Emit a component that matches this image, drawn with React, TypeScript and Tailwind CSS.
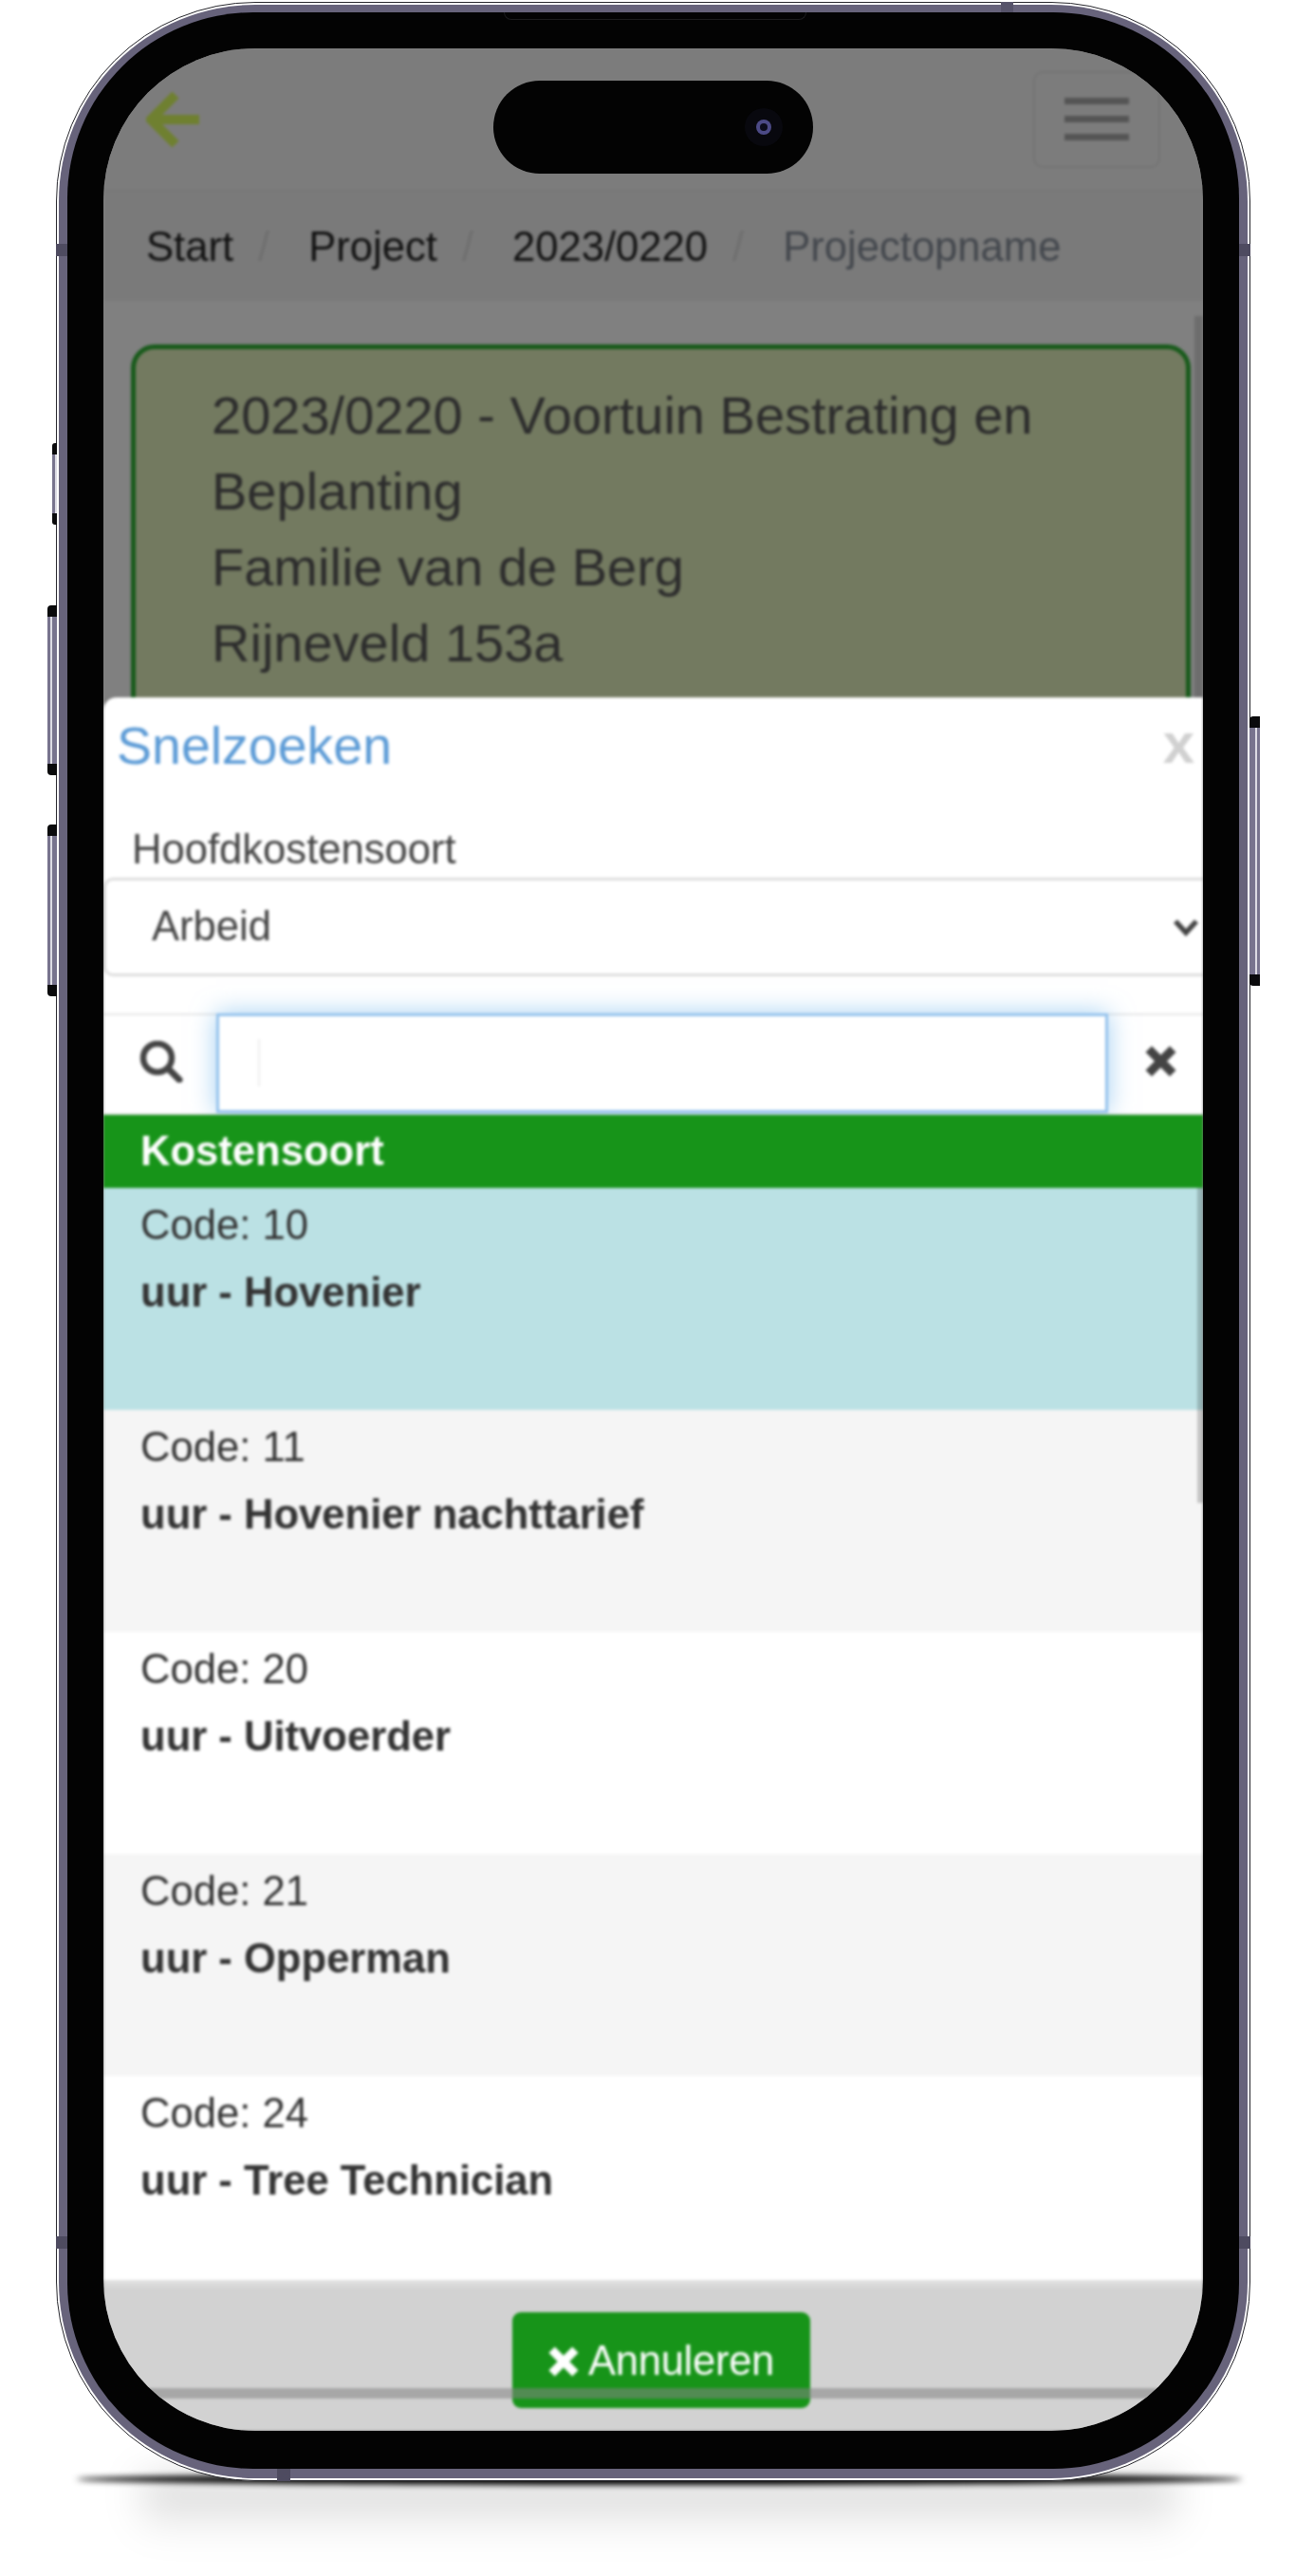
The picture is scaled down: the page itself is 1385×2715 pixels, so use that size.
import React from 'react';

const rows = [
    { code: '10', name: 'uur - Hovenier', bg: 'bg-[#bbe1e4]' },
    { code: '11', name: 'uur - Hovenier nachttarief', bg: 'bg-[#f5f5f5]' },
    { code: '20', name: 'uur - Uitvoerder', bg: 'bg-white' },
    { code: '21', name: 'uur - Opperman', bg: 'bg-[#f5f5f5]' },
    { code: '24', name: 'uur - Tree Technician', bg: 'bg-white' },
];

function SideKey({ className }: { className: string }) {
    return (
        <div className={`absolute border-y-[12px] border-[#0a0a0c] bg-[#78748e] ${className}`}>
            <div className="absolute inset-y-0 left-[3px] w-[2px] bg-[#dddce4]" />
        </div>
    );
}

function Slash() {
    return <span className="ml-[26px] mr-[41px] text-[#6f6f6f]">/</span>;
}

function RemoveIcon({ size, color }: { size: number; color: string }) {
    return (
        <svg width={size} height={size} viewBox="0 0 32 32">
            <path d="M5 5 L27 27 M27 5 L5 27" stroke={color} strokeWidth="8" fill="none" />
        </svg>
    );
}

export default function App() {
    return (
        <div className="relative w-[1385px] h-[2715px] overflow-hidden bg-white pt-[2px] pl-[59px] font-['Liberation_Sans',Arial,sans-serif]">
            {/* shadow under the phone */}
            <div className="absolute left-[80px] top-[2607px] h-[12px] w-[1230px] rounded-[50%] bg-black blur-[3px]" />
            <div className="absolute left-[150px] top-[2612px] h-[60px] w-[1090px] bg-gradient-to-b from-black/20 to-transparent blur-[20px]" />

            <div className="relative h-[2613px] w-[1259px] rounded-[210px] border border-[#26262c] bg-white p-[2px]">
                <SideKey className="left-[-5px] top-[464px] h-[86px] w-[5px] rounded-l-[3px]" />
                <SideKey className="left-[-10px] top-[635px] h-[179px] w-[10px] rounded-l-[4px]" />
                <SideKey className="left-[-10px] top-[866px] h-[181px] w-[10px] rounded-l-[4px]" />
                <SideKey className="right-[-11px] top-[752px] h-[284px] w-[11px] rounded-r-[4px] rotate-180" />

                <div className="relative h-full rounded-[207px] bg-[#67637b] px-[9px] pt-[8px] pb-[10px]">
                    {/* antenna bands */}
                    <div className="absolute left-[-3px] top-[252px] h-[13px] w-[12px] bg-[#4e4b60]" />
                    <div className="absolute right-[-3px] top-[252px] h-[13px] w-[12px] bg-[#4e4b60]" />
                    <div className="absolute left-[-3px] top-[2352px] h-[13px] w-[12px] bg-[#4e4b60]" />
                    <div className="absolute right-[-3px] top-[2352px] h-[13px] w-[12px] bg-[#4e4b60]" />
                    <div className="absolute left-[993px] top-[-3px] h-[11px] w-[13px] bg-[#56536a]" />
                    <div className="absolute left-[230px] bottom-[-3px] h-[13px] w-[14px] bg-[#4e4b60]" />

                    <div className="relative h-full rounded-[196px] bg-[#030303] px-[38px] pt-[38px] pb-[40px]">
                        {/* earpiece */}
                        <div className="absolute left-[460px] top-0 h-[8px] w-[319px] rounded-b-[8px] border-x border-b border-[#1c1c1e]" />

                        <div className="relative h-full overflow-hidden rounded-[160px] bg-[#808080]">
                            <div className="relative flex h-full flex-col blur-[1.4px]">
                                {/* top bar */}
                                <div className="flex h-[149px] shrink-0 items-center justify-between bg-[#7c7c7c] pl-[45px] pr-[45px]">
                                    <svg width="58" height="58" viewBox="0 0 58 58">
                                        <path d="M31 3 L5 29 L31 55 M5 29 L56 29" stroke="#6f8030" strokeWidth="10" fill="none" />
                                    </svg>
                                    <div className="flex h-[102px] w-[134px] flex-col items-center justify-center gap-[12px] rounded-[10px] border-2 border-[#747474]">
                                        <span className="h-[7px] w-[68px] bg-[#555]" />
                                        <span className="h-[7px] w-[68px] bg-[#555]" />
                                        <span className="h-[7px] w-[68px] bg-[#555]" />
                                    </div>
                                </div>

                                {/* breadcrumb */}
                                <div className="flex h-[117px] shrink-0 items-center border-t-2 border-[#777] bg-[#7a7a7a] pt-[2px] pl-[45px] text-[43.6px] text-[#111]">
                                    <span>Start</span>
                                    <Slash />
                                    <span>Project</span>
                                    <Slash />
                                    <span>2023/0220</span>
                                    <Slash />
                                    <span className="text-[#43474d]">Projectopname</span>
                                </div>

                                {/* page under the dialog */}
                                <div className="relative flex-1 overflow-hidden pl-[29px] pr-[13px] pt-[46px]">
                                    <div className="absolute right-0 top-[16px] h-full w-[9px] bg-[#6d6d6d]" />
                                    <div className="h-[600px] rounded-[25px] border-[5px] border-[#175a1a] bg-[#737a60] pl-[80px] pt-[30px] text-[56px] leading-[80px] text-[#2c2c2c]">
                                        <div>2023/0220 - Voortuin Bestrating en</div>
                                        <div>Beplanting</div>
                                        <div>Familie van de Berg</div>
                                        <div>Rijneveld 153a</div>
                                    </div>
                                </div>

                                {/* Snelzoeken dialog */}
                                <div className="absolute inset-x-0 bottom-0 top-[684px] flex flex-col rounded-tl-[14px] bg-white">
                                    <div className="flex h-[98px] shrink-0 items-center justify-between pl-[14px] pr-[9px]">
                                        <span className="mt-[6px] text-[55.5px] leading-none text-[#5c9bd6]">Snelzoeken</span>
                                        <span className="text-[60px] font-bold leading-none text-[#d0d0d0]">x</span>
                                    </div>
                                    <label className="mt-[37px] block h-[50px] pl-[30px] text-[43.6px] leading-[50px] text-[#444]">
                                        Hoofdkostensoort
                                    </label>
                                    <div className="relative mt-[5px] h-[104px] shrink-0">
                                        <select
                                            defaultValue="Arbeid"
                                            className="h-full w-full appearance-none rounded-l-[10px] border-[3px] border-r-0 border-[#dedede] bg-white pl-[48px] text-[43.6px] text-[#444] outline-none"
                                        >
                                            <option value="Arbeid">Arbeid</option>
                                        </select>
                                        <svg className="absolute right-[4px] top-[42px]" width="28" height="21" viewBox="0 0 28 21">
                                            <path d="M3 4 L14 16 L25 4" stroke="#444" strokeWidth="5.5" fill="none" />
                                        </svg>
                                    </div>

                                    <div className="mt-[39px] flex h-[107px] shrink-0 border-y-2 border-[#e6e6e6]">
                                        <div className="flex w-[119px] shrink-0 items-center pb-[6px] pl-[38px]">
                                            <svg width="46" height="44" viewBox="0 0 46 44">
                                                <circle cx="19" cy="18" r="15" stroke="#444" strokeWidth="6.5" fill="none" />
                                                <path d="M30 29 L42 41" stroke="#444" strokeWidth="7" strokeLinecap="round" />
                                            </svg>
                                        </div>
                                        <div className="relative z-10 mt-[-2px] h-[105px] flex-1">
                                            <input
                                                type="text"
                                                className="h-full w-full border-[3px] border-[#94c2ec] bg-white shadow-[0_0_25px_rgba(102,175,233,0.6)] outline-none"
                                            />
                                            <span className="absolute left-[44px] top-[27px] h-[50px] w-[2px] bg-[#eeeeee]" />
                                        </div>
                                        <div className="flex w-[100px] shrink-0 items-center pb-[6px] pl-[37px]">
                                            <RemoveIcon size={37} color="#444" />
                                        </div>
                                    </div>

                                    <div className="relative z-20 flex h-[77px] shrink-0 items-center bg-[#179419] pl-[39px] text-[43.6px] font-bold text-white">
                                        Kostensoort
                                    </div>

                                    <div className="relative flex-1 overflow-hidden">
                                        <div className="absolute right-0 top-0 z-10 h-[332px] w-[6px] bg-black/20" />
                                        {rows.map((row) => (
                                            <div key={row.code} className={`h-[234px] pl-[39px] pt-[4px] text-[43.6px] leading-[71px] text-[#333] ${row.bg}`}>
                                                <div>Code: {row.code}</div>
                                                <div className="font-bold">{row.name}</div>
                                            </div>
                                        ))}
                                    </div>

                                    <div className="relative h-[159px] shrink-0 bg-gradient-to-b from-[#e2e2e2] to-[#d2d2d2] to-[10px] pl-[431px] pt-[34px]">
                                        <button className="flex h-[101px] w-[314px] items-center gap-[8px] rounded-[9px] bg-[#179419] pl-[36px] pt-[2px] text-[43.6px] tracking-[-0.3px] text-white">
                                            <RemoveIcon size={36} color="#fff" />
                                            Annuleren
                                        </button>
                                        <div className="absolute inset-x-0 top-[114px] h-[11px] bg-[#838383]/55" />
                                    </div>
                                </div>
                            </div>

                            {/* dynamic island */}
                            <div className="absolute left-[411px] top-[34px] flex h-[98px] w-[337px] items-center justify-end rounded-full bg-[#030303] pr-[32px]">
                                <div className="flex h-[40px] w-[40px] items-center justify-center rounded-full bg-[#08080e]">
                                    <div className="flex h-[16px] w-[16px] items-center justify-center rounded-full bg-[#4c4a86]">
                                        <div className="h-[8px] w-[8px] rounded-full bg-[#0c0c1c]" />
                                    </div>
                                </div>
                            </div>
                        </div>
                    </div>
                </div>
            </div>
        </div>
    );
}
